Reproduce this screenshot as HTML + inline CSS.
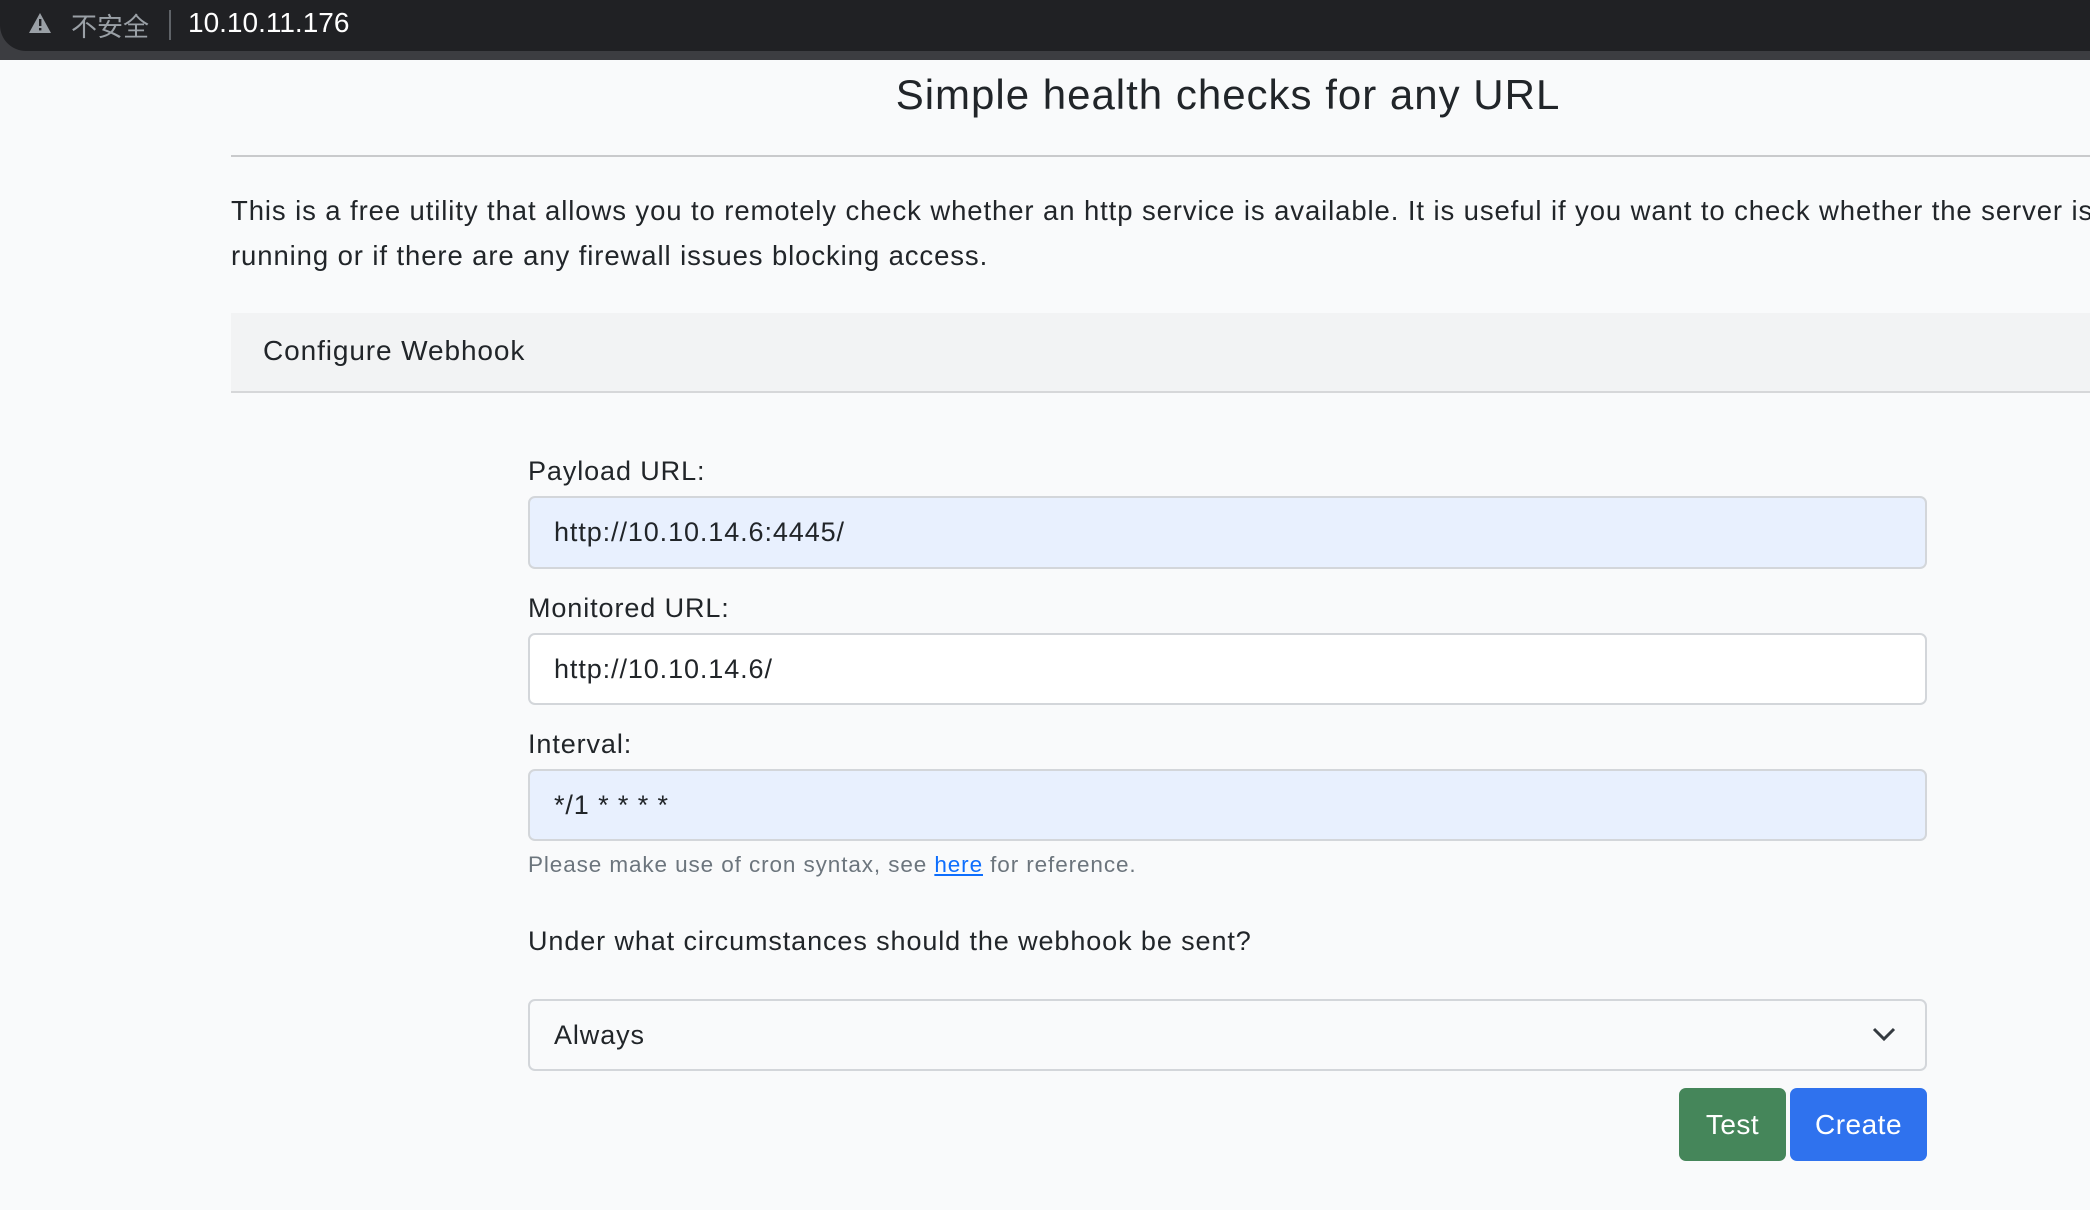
<!DOCTYPE html>
<html><head><meta charset="utf-8"><style>
*{margin:0;padding:0;box-sizing:border-box}
body{width:2090px;height:1210px;overflow:hidden;background:#f9fafb;font-family:"Liberation Sans","Noto Sans CJK SC",sans-serif;color:#212529;position:relative;letter-spacing:0.9px}
.bar{position:absolute;left:0;top:0;width:2090px;height:60px;background:#3c3d41}
.pill{position:absolute;left:0;top:0;width:2090px;height:51px;background:#202124;border-radius:0 0 0 26px}
.a{position:absolute;white-space:nowrap}
.inp{position:absolute;left:528px;width:1399px;border:2px solid #d3d6da;border-radius:7px;font-size:27px;padding-left:24px;display:flex;align-items:center}
.lbl{font-size:27px}
.btn{position:absolute;top:1088px;height:73px;border-radius:7px;color:#fff;font-size:28px;display:flex;align-items:center;justify-content:center;letter-spacing:0.5px}
</style></head><body>
<div class="bar"></div><div class="pill"></div>
<svg class="a" style="left:28px;top:12px" width="24" height="22" viewBox="0 0 24 22"><path d="M12 1 L23 21 H1 Z" fill="#9aa0a6"/><rect x="11" y="7" width="2.4" height="7" fill="#202124"/><rect x="11" y="16" width="2.4" height="2.4" fill="#202124"/></svg>
<div class="a" style="left:71px;top:7px;font-size:26px;color:#9aa0a6;letter-spacing:0">不安全</div>
<div class="a" style="left:169px;top:10px;width:2px;height:30px;background:#5f6368"></div>
<div class="a" style="left:188px;top:7px;font-size:28px;color:#fff;letter-spacing:0">10.10.11.176</div>
<div class="a" style="left:0;width:2456px;text-align:center;top:71px;font-size:42px;letter-spacing:1px">Simple health checks for any URL</div>
<div class="a" style="left:231px;top:155px;width:1859px;height:2px;background:#c9cacc"></div>
<div class="a" style="left:231px;top:188px;width:1859px;overflow:hidden;font-size:27.5px;line-height:45px">This is a free utility that allows you to remotely check whether an http service is available. It is useful if you want to check whether the server is correctly<br>running or if there are any firewall issues blocking access.</div>
<div class="a" style="left:231px;top:313px;width:1859px;height:80px;background:#f2f3f4;border-bottom:2px solid #d6d7d9"></div>
<div class="a" style="left:263px;top:335px;font-size:28px">Configure Webhook</div>
<div class="a lbl" style="left:528px;top:456px">Payload URL:</div>
<div class="inp" style="top:496px;height:73px;background:#e8f0fe">http://10.10.14.6:4445/</div>
<div class="a lbl" style="left:528px;top:593px">Monitored URL:</div>
<div class="inp" style="top:633px;height:72px;background:#fff">http://10.10.14.6/</div>
<div class="a lbl" style="left:528px;top:729px">Interval:</div>
<div class="inp" style="top:769px;height:72px;background:#e8f0fe">*/1 * * * *</div>
<div class="a" style="left:528px;top:852px;font-size:22.5px;color:#6c757d">Please make use of cron syntax, see <span style="color:#0d6efd;text-decoration:underline">here</span> for reference.</div>
<div class="a lbl" style="left:528px;top:926px">Under what circumstances should the webhook be sent?</div>
<div class="inp" style="top:999px;height:72px;background:#f9fafb">Always</div>
<svg class="a" style="left:1872px;top:1026px" width="24" height="16" viewBox="0 0 24 16"><path d="M2 3 L12 13 L22 3" fill="none" stroke="#343a40" stroke-width="3"/></svg>
<div class="btn" style="left:1679px;width:107px;background:#45865a">Test</div>
<div class="btn" style="left:1790px;width:137px;background:#2f72ee">Create</div>
</body></html>
